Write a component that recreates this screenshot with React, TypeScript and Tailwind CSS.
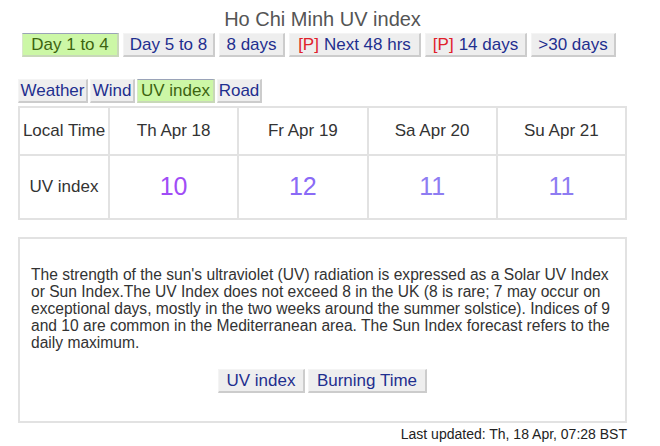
import React from 'react';

interface Tab {
    label: string;
    prefix?: string;
    active?: boolean;
    w: string;
}

const periodTabs: Tab[] = [
    { label: 'Day 1 to 4', active: true, w: 'w-[97px]' },
    { label: 'Day 5 to 8', w: 'w-[92px]' },
    { label: '8 days', w: 'w-[66px]' },
    { label: 'Next 48 hrs', prefix: '[P]', w: 'w-[132px]' },
    { label: '14 days', prefix: '[P]', w: 'w-[102px]' },
    { label: '>30 days', w: 'w-[85px]' },
];

const typeTabs: Tab[] = [
    { label: 'Weather', w: 'w-[70px]' },
    { label: 'Wind', w: 'w-[45px]' },
    { label: 'UV index', active: true, w: 'w-[78px]' },
    { label: 'Road', w: 'w-[45px]' },
];

const days = [
    { day: 'Th Apr 18', uv: '10', color: 'text-[#a04cf6]' },
    { day: 'Fr Apr 19', uv: '12', color: 'text-[#8a6af6]' },
    { day: 'Sa Apr 20', uv: '11', color: 'text-[#8e7cf2]' },
    { day: 'Su Apr 21', uv: '11', color: 'text-[#8e7cf2]' },
];

const TabButton: React.FC<{ tab: Tab }> = ({ tab }) => (
    <div
        className={`${tab.w} shrink-0 whitespace-nowrap flex items-center justify-center leading-none border-t border-l border-r-2 border-b-2 ${
            tab.active
                ? 'bg-[#ccf7a6] text-[#3d6410] border-t-[#9aa3b8] border-l-[#d8e8c8] border-r-[#c8d8b8] border-b-[#c8d8b8]'
                : 'bg-[#eeeeee] text-[#1f2f8f] border-t-[#f4f4f4] border-l-[#f4f4f4] border-r-[#cccccc] border-b-[#cccccc]'
        }`}
    >
        {tab.prefix && <span className="text-[#e0202a] mr-[5px]">{tab.prefix}</span>}
        {tab.label}
    </div>
);

export default function App() {
    return (
        <div className="w-[660px] h-[446px] bg-white font-['Liberation_Sans',Arial,sans-serif] overflow-hidden">
            <div className="w-[609px] ml-[18px]">
                <h1 className="text-center text-[20px] leading-none text-[#555555] pt-[9px]">Ho Chi Minh UV index</h1>

                <div className="flex gap-[4px] ml-[4px] mt-[4px] h-[24px] text-[17px]">
                    {periodTabs.map((t) => (
                        <TabButton key={t.label} tab={t} />
                    ))}
                </div>

                <div className="flex gap-[2px] mt-[22px] h-[24px] text-[17px]">
                    {typeTabs.map((t) => (
                        <TabButton key={t.label} tab={t} />
                    ))}
                </div>

                <table className="mt-[3px] w-full border-collapse text-[17px] text-[#333333] table-fixed">
                    <colgroup>
                        <col className="w-[90px]" />
                        <col />
                        <col />
                        <col />
                        <col />
                    </colgroup>
                    <tbody>
                        <tr className="h-[48px]">
                            <td className="border-2 border-[#e2e2e2] text-center whitespace-nowrap">Local Time</td>
                            {days.map((d) => (
                                <td key={d.day} className="border-2 border-[#e2e2e2] text-center">
                                    {d.day}
                                </td>
                            ))}
                        </tr>
                        <tr className="h-[64px]">
                            <td className="border-2 border-[#e2e2e2] text-center">UV index</td>
                            {days.map((d) => (
                                <td key={d.day} className={`border-2 border-[#e2e2e2] text-center text-[25px] ${d.color}`}>
                                    {d.uv}
                                </td>
                            ))}
                        </tr>
                    </tbody>
                </table>

                <div className="mt-[17px] h-[186px] border-2 border-[#e2e2e2] px-[11px] pt-[27px]">
                    <p className="text-[15.6px] leading-[17px] text-[#333333]">
                        The strength of the sun's ultraviolet (UV) radiation is expressed as a Solar UV Index or Sun
                        Index.The UV Index does not exceed 8 in the UK (8 is rare; 7 may occur on exceptional days,
                        mostly in the two weeks around the summer solstice). Indices of 9 and 10 are common in the
                        Mediterranean area. The Sun Index forecast refers to the daily maximum.
                    </p>
                    <div className="flex justify-center gap-[3px] mt-[18px] h-[24px] text-[17px]">
                        <TabButton tab={{ label: 'UV index', w: 'w-[87px]' }} />
                        <TabButton tab={{ label: 'Burning Time', w: 'w-[119px]' }} />
                    </div>
                </div>

                <div className="text-right text-[14px] leading-none text-[#222222] mt-[4px]">
                    Last updated: Th, 18 Apr, 07:28 BST
                </div>
            </div>
        </div>
    );
}
